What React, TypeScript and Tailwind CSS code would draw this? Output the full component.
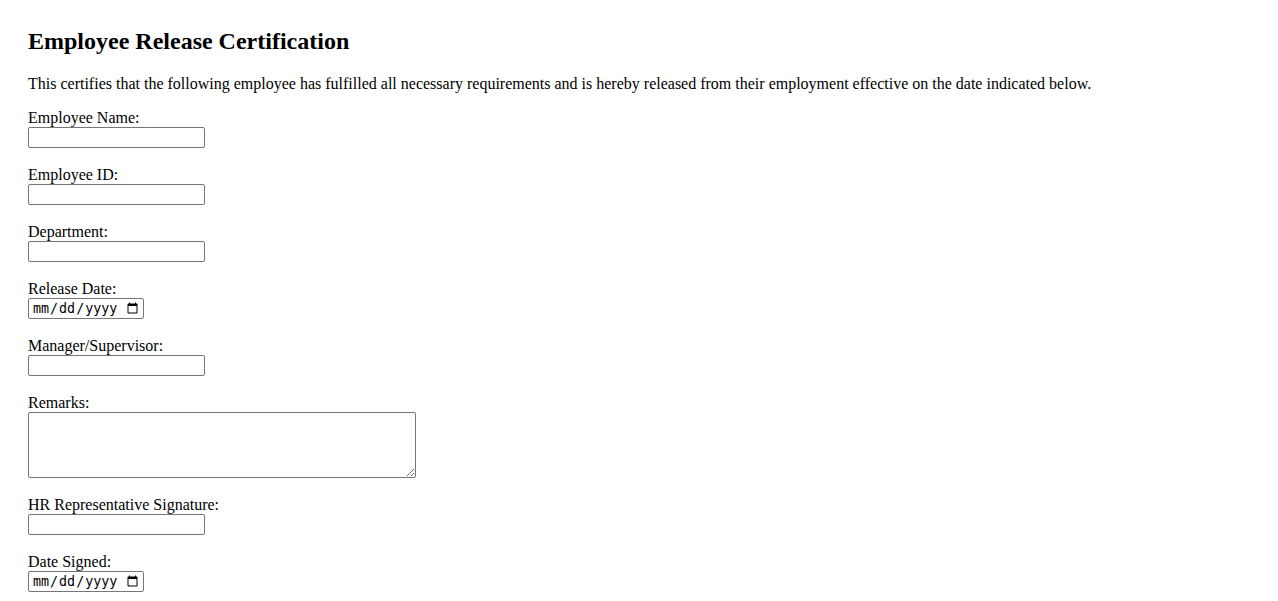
import React from "react";

const serif = { fontFamily: '"Liberation Serif", "Times New Roman", serif' };

function Field({ label, children, gap = true }: { label: string; children: React.ReactNode; gap?: boolean }) {
  return (
    <div className={gap ? "mb-[18px]" : ""}>
      <label className="block h-[18px] leading-[18px] text-[16px]">{label}</label>
      <div className="flex">{children}</div>
    </div>
  );
}

const textCls =
  "block w-[177px] h-[21px] border border-[#767676] rounded-[2px] bg-white px-[2px] text-[13.33px] outline-none";
const dateCls =
  "block w-[116px] h-[21px] border border-[#767676] rounded-[2px] bg-white pl-[3px] pr-[2px] text-[13.33px] font-['DejaVu_Sans_Mono',monospace] outline-none";

export default function App() {
  return (
    <div className="bg-white text-black min-h-[601px] px-[28px] pt-[27px]" style={serif}>
      <h2 className="text-[24px] font-bold leading-[28px] mb-[20px]">Employee Release Certification</h2>
      <p className="text-[16px] leading-[18px] mb-[16px]">
        This certifies that the following employee has fulfilled all necessary requirements and is hereby released from their employment effective on the date indicated below.
      </p>
      <form>
        <Field label="Employee Name:">
          <input type="text" className={textCls} />
        </Field>
        <Field label="Employee ID:">
          <input type="text" className={textCls} />
        </Field>
        <Field label="Department:">
          <input type="text" className={textCls} />
        </Field>
        <Field label="Release Date:">
          <input type="date" className={dateCls} />
        </Field>
        <Field label="Manager/Supervisor:">
          <input type="text" className={textCls} />
        </Field>
        <Field label="Remarks:">
          <textarea className="block w-[388px] h-[66px] border border-[#767676] rounded-[2px] bg-white text-[13.33px] outline-none" />
        </Field>
        <Field label="HR Representative Signature:">
          <input type="text" className={textCls} />
        </Field>
        <Field label="Date Signed:" gap={false}>
          <input type="date" className={dateCls} />
        </Field>
      </form>
    </div>
  );
}
